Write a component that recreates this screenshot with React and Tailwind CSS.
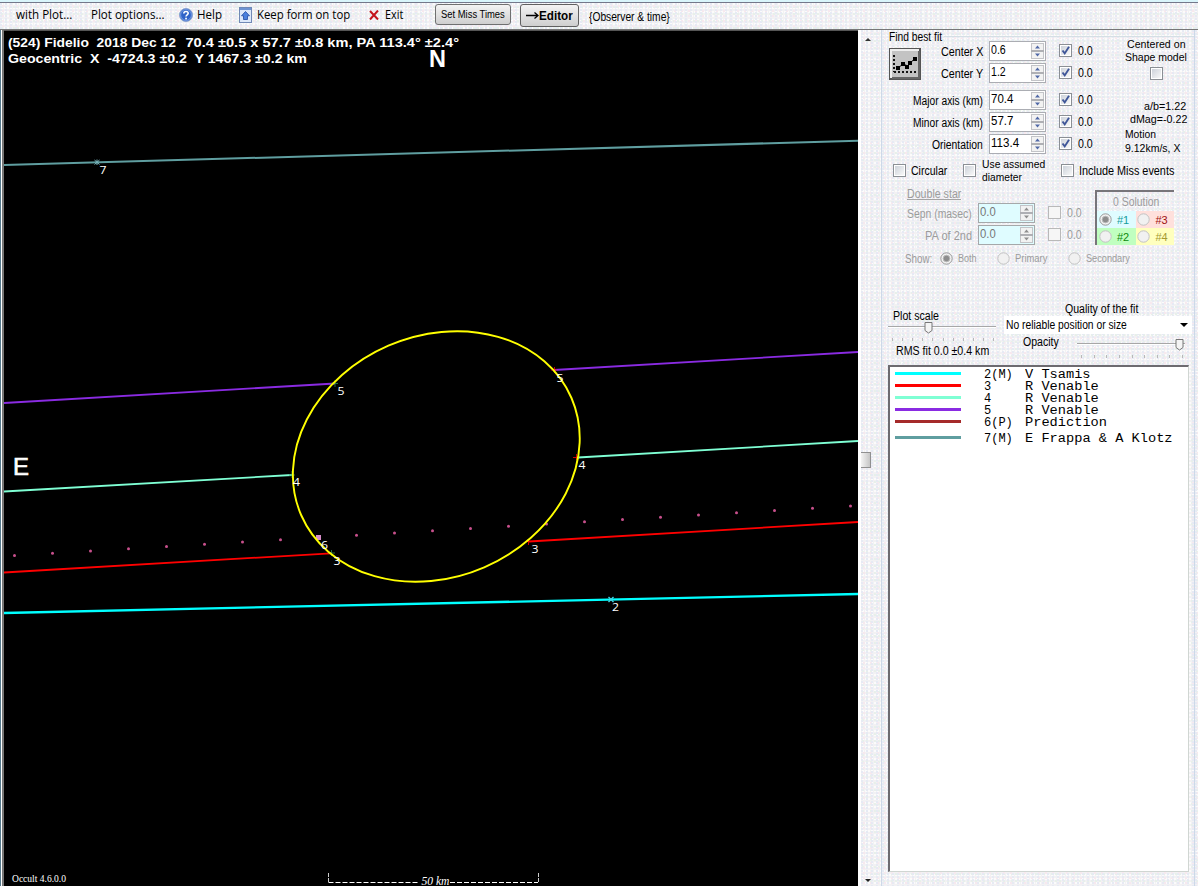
import React, { useLayoutEffect, useRef } from "react";

const DITHER =
  "bg-[#f2f1f3] [background-image:radial-gradient(circle_at_1px_1px,#e6eaf4_0.7px,transparent_1px),radial-gradient(circle_at_1px_1px,#f7e8ee_0.7px,transparent_1px),radial-gradient(circle_at_1px_1px,#e7f0ea_0.7px,transparent_1px),radial-gradient(circle_at_1px_1px,#fbfbfb_0.7px,transparent_1px)] [background-size:5px_3px,7px_5px,4px_7px,3px_4px] [background-position:0_0,2px_2px,1px_3px,1px_0]";

/* Single line of text condensed or widened to a given width. */
function T({ w, children, className = "", inner = "" }) {
  const box = useRef(null);
  const ref = useRef(null);
  useLayoutEffect(() => {
    const n = ref.current.offsetWidth;
    box.current.style.width = w + "px";
    ref.current.style.transform = `scaleX(${w / n})`;
  }, [w, children]);
  return (
    <span ref={box} className={`block shrink-0 whitespace-pre ${className}`}>
      <span ref={ref} className={`inline-block origin-left ${inner}`}>{children}</span>
    </span>
  );
}

function Check({ on, dim }) {
  return (
    <span className={`block h-[13px] w-[13px] shrink-0 border p-px ${dim ? "border-[#b9b9b9] bg-[#f6f6f6]" : "border-[#8b8f94] bg-white"}`}>
      <span className={`block h-full w-full ${dim ? "" : "bg-linear-to-br from-[#cdd2da] to-[#f8f8f8]"}`}>
        {on && (
          <svg viewBox="0 0 9 9" className="h-[9px] w-[9px] overflow-visible">
            <path d="M1.5 4.5 L3.7 7.4 L8 0.8" fill="none" stroke="#3f5698" strokeWidth="1.9" />
          </svg>
        )}
      </span>
    </span>
  );
}

function Radio({ on }) {
  return (
    <svg viewBox="0 0 13 13" className="h-[13px] w-[13px] shrink-0">
      <circle cx="6.5" cy="6.5" r="5.7" fill="#f1f1f1" stroke={on ? "#999" : "#c2c2c2"} />
      {on && <circle cx="6.5" cy="6.5" r="3.3" fill="#8d8d8d" stroke="#b9b9b9" />}
    </svg>
  );
}

function Spin({ value, w, dim }) {
  const c = dim ? "#8f8f8f" : "#5068a6";
  return (
    <div className={`flex h-5 w-[57px] shrink-0 justify-between border ${dim ? "border-[#a5a8aa] bg-[#dffcff]" : "border-[#abadb3] bg-white"}`}>
      <T w={w} className={`pl-px text-[12px] leading-[17px] ${dim ? "text-[#777]" : "text-black"}`}>{value}</T>
      <svg viewBox="0 0 14 18" className="h-[18px] w-[14px]">
        <rect x="0.5" y="1.5" width="12" height="7" fill="#f2f2f2" stroke="#c3c4c8" />
        <rect x="0.5" y="9.5" width="12" height="7" fill="#f2f2f2" stroke="#c3c4c8" />
        <path d="M0 9h13" stroke="#9a9ba0" />
        <path d="M4 6.5 L6.5 3.5 L9 6.5Z M4 11.5 L6.5 14.5 L9 11.5Z" fill={c} />
      </svg>
    </div>
  );
}

function FitRow({ label, lw, value, vw, className = "" }) {
  return (
    <div className={`flex h-5 items-center ${className}`}>
      <div className="flex w-[62px] justify-end pt-[2px]"><T w={lw}>{label}</T></div>
      <div className="ml-1.5"><Spin value={value} w={vw} /></div>
      <div className="mb-px ml-[13px]"><Check on /></div>
      <T w={15} className="ml-1.5">0.0</T>
    </div>
  );
}

function StarRow({ label, w }) {
  return (
    <div className="flex h-[22px] items-center text-[#9c9c9c]">
      <div className="flex w-[90px] justify-end pt-0.5"><T w={w}>{label}</T></div>
      <div className="ml-1.5"><Spin value="0.0" w={16} dim /></div>
      <div className="mb-px ml-[13px]"><Check dim /></div>
      <T w={15} className="ml-1.5">0.0</T>
    </div>
  );
}

function MenuBar() {
  return (
    <div className={`flex h-[27px] shrink-0 items-start border-b border-[#777] pl-4 font-['Open_Sans','Noto_Sans',sans-serif] text-[12px] leading-[18px] text-black ${DITHER}`}>
      <T w={56} className="mt-[3px]">with Plot...</T>
      <T w={73} className="ml-[19px] mt-[3px]">Plot options...</T>
      <svg viewBox="0 0 14 14" className="ml-[15px] mt-[5px] h-3.5 w-3.5 shrink-0">
        <circle cx="7" cy="7" r="6.5" fill="#2f63c8" stroke="#8ba3cf" />
        <circle cx="7" cy="7" r="5.4" fill="none" stroke="#9dbcf2" strokeWidth=".6" />
        <path d="M4.8 5.5 C4.8 2.8 9.2 2.8 9.2 5.3 C9.2 6.8 7 6.8 7 8.6" fill="none" stroke="#fff" strokeWidth="1.6" />
        <rect x="6.2" y="9.7" width="1.7" height="1.7" fill="#fff" />
      </svg>
      <T w={25} className="ml-1 mt-[3px]">Help</T>
      <svg viewBox="0 0 13 16" className="ml-[17px] mt-1 h-4 w-[13px] shrink-0">
        <rect x=".5" y=".5" width="12" height="15" fill="#dce8fa" stroke="#7189b6" />
        <rect x="1" y="1" width="11" height="2" fill="#6f94d2" />
        <path d="M6.5 4.5 L10.5 8.8 H8.5 V12.5 H4.5 V8.8 H2.5Z" fill="#4a80de" stroke="#1f4aa2" strokeWidth=".8" />
      </svg>
      <T w={93} className="ml-[5px] mt-[3px]">Keep form on top</T>
      <svg viewBox="0 0 10 10" className="ml-[19px] mt-[7px] h-2.5 w-2.5 shrink-0">
        <path d="M1 1 L9 9.5 M9 .5 L1 9.5" stroke="#c4141c" strokeWidth="2" />
      </svg>
      <T w={18} className="ml-1.5 mt-[3px]">Exit</T>
      <div className="ml-8 mt-px flex h-[21px] w-[76px] items-center justify-center rounded-[3px] border border-[#707070] bg-linear-to-b from-[#f3f3f3] to-[#cfcfcf] font-['Liberation_Sans',sans-serif] text-[10px]">
        <T w={64}>Set Miss Times</T>
      </div>
      <div className="ml-[9px] mt-px flex h-[23px] w-[59px] items-center justify-center rounded-[3px] border border-[#606060] bg-linear-to-b from-[#f3f3f3] to-[#cfcfcf] font-['Liberation_Sans',sans-serif] text-[12px] font-bold">
        <svg viewBox="0 0 13 9" className="h-[9px] w-[13px]"><path d="M0 4.5H12M8.5 1.5L12 4.5L8.5 7.5" fill="none" stroke="#000" strokeWidth="1.3" /></svg>
        <T w={34}>Editor</T>
      </div>
      <T w={81} className="ml-2.5 mt-[5px] font-['Liberation_Sans',sans-serif] text-[12px]">{"{Observer & time}"}</T>
    </div>
  );
}

const DOTS = Array.from({ length: 23 }, (_, i) => i);
const TRACKS = [
  ["#8a2be2", 4, 403, 335, 383.5, 1.8],
  ["#8a2be2", 554, 370, 858, 352, 1.8],
  ["#7fffd4", 4, 491.5, 292, 475, 1.8],
  ["#7fffd4", 578, 457.5, 858, 441, 1.8],
  ["#ff0000", 4, 572.5, 331, 553.3, 1.8],
  ["#ff0000", 529, 541.5, 858, 522, 1.8],
  ["#00ffff", 4, 613, 858, 594, 2.3],
  ["#5f9ea0", 4, 165, 858, 140.7, 2],
];
const TAGS = [
  ["7", 99.5, 174], ["5", 337.5, 395], ["5", 556.5, 382], ["4", 293, 486],
  ["4", 578.5, 469], ["6", 321, 549], ["3", 333.5, 565], ["3", 531.5, 553], ["2", 612, 611],
];

function Plot() {
  return (
    <svg viewBox="4 31 854 855" className="h-[855px] w-[854px] shrink-0 bg-black">
      <g fill="#fff" fontFamily="Liberation Sans, sans-serif" fontWeight="bold" fontSize="13">
        <text x="8" y="46.5" textLength="168" lengthAdjust="spacingAndGlyphs">{"(524) Fidelio\u00a0 2018 Dec 12"}</text>
        <text x="185.5" y="46.5" textLength="273.5" lengthAdjust="spacingAndGlyphs">70.4 ±0.5 x 57.7 ±0.8 km, PA 113.4° ±2.4°</text>
        <text x="8" y="63" textLength="299" lengthAdjust="spacingAndGlyphs">{"Geocentric\u00a0 X\u00a0 -4724.3 ±0.2\u00a0 Y 1467.3 ±0.2 km"}</text>
        <text x="429" y="67" fontSize="23" textLength="17" lengthAdjust="spacingAndGlyphs">N</text>
        <text x="13" y="475" fontSize="23.5" fontWeight="normal" stroke="#fff" strokeWidth=".6" textLength="16" lengthAdjust="spacingAndGlyphs">E</text>
      </g>
      {TRACKS.map(([c, x1, y1, x2, y2, w]) => (
        <line key={c + x1} x1={x1} y1={y1} x2={x2} y2={y2} stroke={c} strokeWidth={w} />
      ))}
      {DOTS.map((i) => (
        <circle key={i} cx={14.5 + 38 * i} cy={555.5 - 2.25 * i} r="1.5" fill="#c8508c" />
      ))}
      <path d="M331 383.5h7M335 380v7M289 475h6M292 471v7M328 553h7M331.5 550v6" stroke="#2e8b57" strokeWidth=".8" />
      <path d="M551 370h6M554.5 367v6M573 457.5h6M576.5 454v6M526 541.5h6M528.5 539v6" stroke="#f00" strokeWidth=".8" />
      <rect x="316" y="535" width="5" height="5" fill="#d58cc8" />
      <ellipse cx="436.3" cy="456.5" rx="147.3" ry="120.7" transform="rotate(-23.4 436.3 456.5)" fill="none" stroke="#ffff00" strokeWidth="1.9" />
      <path d="M94.5 160l5 4.5M99.5 160l-5 4.5M97 159.5v5.5" stroke="#79b5bd" />
      <path d="M608.5 597l5 5M613.5 597l-5 5" stroke="#40d4e4" strokeWidth="1.4" />
      <g fill="#fff" fontFamily="Open Sans, Noto Sans, sans-serif" fontSize="11.5">
        {TAGS.map(([t, x, y]) => (
          <text key={t + x} x={x} y={y} textLength="7" lengthAdjust="spacingAndGlyphs">{t}</text>
        ))}
      </g>
      <text x="12" y="882" fill="#fff" fontFamily="Liberation Serif, serif" fontSize="10" textLength="54" lengthAdjust="spacingAndGlyphs">Occult 4.6.0.0</text>
      <text x="421.5" y="885" fill="#fff" fontFamily="Liberation Serif, serif" fontStyle="italic" fontSize="11.5" textLength="28" lengthAdjust="spacingAndGlyphs">50 km</text>
      <path d="M328.5 882.5H418M450 882.5H538" stroke="#fff" strokeDasharray="5 2" />
      <path d="M328.5 873v10M538.5 873v10" stroke="#ccc" strokeDasharray="4 1" />
    </svg>
  );
}

function FitSection() {
  return (
    <div className="flex h-[127px] shrink-0">
      <div className="w-[39px] shrink-0 pl-[7px]">
        <T w={53} className="leading-[14px]">Find best fit</T>
        <svg viewBox="0 0 32 32" className="mt-1 h-8 w-8">
          <rect width="32" height="32" fill="#555" />
          <rect x="1" y="1" width="29" height="29" fill="#eee" />
          <rect x="3" y="3" width="28" height="28" fill="#666" />
          <rect x="3" y="3" width="26" height="26" fill="#c3c3c3" />
          <path d="M5 7v17M5 24h23" stroke="#111" strokeWidth="2" strokeDasharray="2 2" />
          <path d="M9 20L14 16L19 18L25 11" fill="none" stroke="#111" />
          <path d="M7 18h4v4h-4zM12 14h4v4h-4zM16 17h4v4h-4zM19 13h4v4h-4zM24 9h4v4h-4z" fill="#000" />
        </svg>
      </div>
      <div>
        <div className="ml-[23px] h-[11px] pt-1.5"><div className="h-px bg-[#d5dfe5]" /></div>
        <FitRow label="Center X" lw={42} value="0.6" vw={15} />
        <FitRow label="Center Y" lw={42} value="1.2" vw={15} className="mt-0.5" />
        <FitRow label="Major axis (km)" lw={70} value="70.4" vw={22} className="mt-[7px]" />
        <FitRow label="Minor axis (km)" lw={70} value="57.7" vw={22} className="mt-0.5" />
        <FitRow label="Orientation" lw={51} value="113.4" vw={28} className="mt-0.5" />
      </div>
      <div className="grow pt-1.5">
        <div className="h-px bg-[#d5dfe5]" />
        <div className="ml-[31px] mt-px flex w-[64px] flex-col items-center text-[11px] leading-[13px]">
          <T w={59}>Centered on</T>
          <T w={62}>Shape model</T>
          <div className="mt-[3px]"><Check /></div>
          <T w={42} className="mr-0.5 mt-5 self-end">a/b=1.22</T>
          <T w={57} className="mr-px self-end text-[10.5px]">dMag=-0.22</T>
          <T w={31} className="ml-px mt-0.5 self-start text-[10px]">Motion</T>
          <T w={55} className="ml-px mt-px self-start text-[10.5px]">9.12km/s, X</T>
        </div>
      </div>
    </div>
  );
}

function DoubleStar() {
  return (
    <div className="flex h-[64px] shrink-0 text-[#9c9c9c]">
      <div className="w-[213px] pt-0.5">
        <T w={54} className="ml-[25px] h-[15px] leading-[14px]" inner="h-[13px] border-b border-[#a4a4a4]">Double star</T>
        <StarRow label="Sepn (masec)" w={65} />
        <StarRow label="PA of 2nd" w={47} />
      </div>
      <div className="mt-[5px] h-[55px] w-[79px] border-l-2 border-t-2 border-[#77757a]">
        <div className="flex h-[19px] items-center justify-center"><T w={46}>0 Solution</T></div>
        <div className="grid grid-cols-2 text-[11px]">
          <div className="flex h-[17px] items-center bg-[#dffcff] pl-0.5 text-[#159c9c]"><Radio on /><T w={12} className="ml-[5px]">#1</T></div>
          <div className="flex h-[17px] items-center bg-[#ffe0dc] pl-px text-[#a01010]"><Radio /><T w={12} className="ml-1.5">#3</T></div>
          <div className="flex h-[17px] items-center bg-[#c0ffc0] pl-0.5 text-[#0d8a0d]"><Radio /><T w={12} className="ml-[5px]">#2</T></div>
          <div className="flex h-[17px] items-center bg-[#ffffbe] pl-px text-[#a69a30]"><Radio /><T w={12} className="ml-1.5">#4</T></div>
        </div>
      </div>
    </div>
  );
}

function Slider({ pos, width, ticks }) {
  return (
    <svg width={width} height="26" viewBox={`0 1 ${width} 26`} className="block shrink-0">
      <path d={`M0 8.5H${width}`} stroke="#a7a7a7" />
      <path d={`M0 9.5H${width}`} stroke="#fff" />
      {Array.from({ length: ticks }, (_, i) => (
        <path key={i} d={`M${4.5 + Math.round((i * (width - 7)) / (ticks - 1))} 20v3`} stroke="#b8b8b8" />
      ))}
      <path d={`M${pos - 3.5} 4.5h7v8l-3.5 2.5l-3.5 -2.5z`} fill="#f4f4f4" stroke="#777" />
    </svg>
  );
}

function QualitySection() {
  return (
    <div className="flex h-[95px] shrink-0">
      <div className="w-[115px] pl-[6px] pt-[40px]">
        <T w={46} className="ml-[5px] h-[10px] leading-[14px]">Plot scale</T>
        <Slider pos={40.5} width={108} ticks={11} />
        <T w={93} className="-mt-px ml-2 leading-[14px]">RMS fit 0.0 ±0.4 km</T>
      </div>
      <div className="pl-[7px] pt-[33px]">
        <T w={73} className="ml-[61px] leading-[14px]">Quality of the fit</T>
        <div className="flex h-[18px] w-[188px] items-center justify-between bg-white pl-0.5 pr-1">
          <T w={121}>No reliable position or size</T>
          <svg viewBox="0 0 8 4" className="h-1 w-2"><path d="M0 0h8L4 4z" fill="#000" /></svg>
        </div>
        <div className="flex pl-[19px]">
          <T w={36} className="mt-px leading-[14px]">Opacity</T>
          <div className="ml-[18px] mt-0.5"><Slider pos={102.5} width={108} ticks={9} /></div>
        </div>
      </div>
    </div>
  );
}

const LEGEND = [
  ["bg-[#00ffff]", "2(M)", 29, "V Tsamis", 66, ""],
  ["bg-[#ff0000]", "3", 7, "R Venable", 74, ""],
  ["bg-[#7fffd4]", "4", 7, "R Venable", 74, ""],
  ["bg-[#8a2be2]", "5", 7, "R Venable", 74, ""],
  ["bg-[#a52a2a]", "6(P)", 29, "Prediction", 82, ""],
  ["bg-[#5f9ea0]", "7(M)", 29, "E Frappa & A Klotz", 148, "mt-1"],
];

function Legend() {
  return (
    <div className="ml-1.5 h-[507px] w-[301px] shrink-0 border-b border-l-2 border-r border-t-2 border-b-[#d0d6d2] border-l-[#6d6b70] border-r-[#d0d6d2] border-t-[#6d6b70] bg-white pt-px font-['Liberation_Mono',monospace] text-[12px] leading-[12px]">
      {LEGEND.map(([c, id, iw, name, nw, cls]) => (
        <div key={id} className={`flex h-3 items-center ${cls}`}>
          <span className={`mb-0.5 ml-[5px] h-[3px] w-[66px] ${c}`} />
          <div className="ml-[23px] w-[41px] pt-px"><T w={iw}>{id}</T></div>
          <T w={nw} className="pt-px">{name}</T>
        </div>
      ))}
    </div>
  );
}

export default function App() {
  return (
    <div className="flex h-[886px] w-[1198px] flex-col overflow-hidden bg-[#f1f0f2] font-['Liberation_Sans',sans-serif] text-[12px] leading-[14px] text-black">
      <div className="h-[3px] shrink-0 border-b border-[#74788a] bg-[#d9f5fb]" />
      <MenuBar />
      <div className="flex h-[856px] shrink-0">
        <div className="w-1 shrink-0 border-l border-r-2 border-l-[#55798c] border-r-[#777] bg-white" />
        <div className="shrink-0 border-t border-[#555]"><Plot /></div>
        <div className={`flex w-[23px] shrink-0 flex-col justify-between border-l-[3px] border-white pb-1 pl-1 pt-2 ${DITHER}`}>
          <svg viewBox="0 0 6 3" className="h-[3px] w-1.5"><path d="M0 3h6L3 0z" fill="#333" /></svg>
          <div className="-ml-1 h-4 w-2.5 border border-l-0 border-[#909090] bg-linear-to-r from-[#f4f4f4] to-[#c6c6c6]" />
          <svg viewBox="0 0 6 3" className="h-[3px] w-1.5"><path d="M0 0h6L3 3z" fill="#222" /></svg>
        </div>
        <div className={`flex w-[314px] shrink-0 flex-col border-x border-[#cdd9e8] ${DITHER}`}>
          <FitSection />
          <div className="flex h-[28px] shrink-0 items-center pl-[11px]">
            <div className="mb-0.5"><Check /></div>
            <T w={36} className="ml-[5px]">Circular</T>
            <div className="mb-0.5 ml-4"><Check /></div>
            <div className="ml-1.5 text-[10.5px] leading-[13px]">
              <T w={63}>Use assumed</T>
              <T w={40}>diameter</T>
            </div>
            <div className="mb-0.5 ml-4"><Check /></div>
            <T w={95} className="ml-[5px]">Include Miss events</T>
          </div>
          <DoubleStar />
          <div className="flex h-5 shrink-0 items-center pl-[23px] text-[#9c9c9c]">
            <T w={27}>Show:</T>
            <div className="mb-0.5 ml-2"><Radio on /></div>
            <T w={19} className="ml-[5px] text-[10px]">Both</T>
            <div className="mb-0.5 ml-5"><Radio /></div>
            <T w={32} className="ml-[5px] text-[10px]">Primary</T>
            <div className="mb-0.5 ml-[21px]"><Radio /></div>
            <T w={44} className="ml-[5px] text-[10px]">Secondary</T>
          </div>
          <QualitySection />
          <div className="h-px shrink-0" />
          <Legend />
        </div>
        <div className={`w-[3px] ${DITHER}`} />
      </div>
    </div>
  );
}
